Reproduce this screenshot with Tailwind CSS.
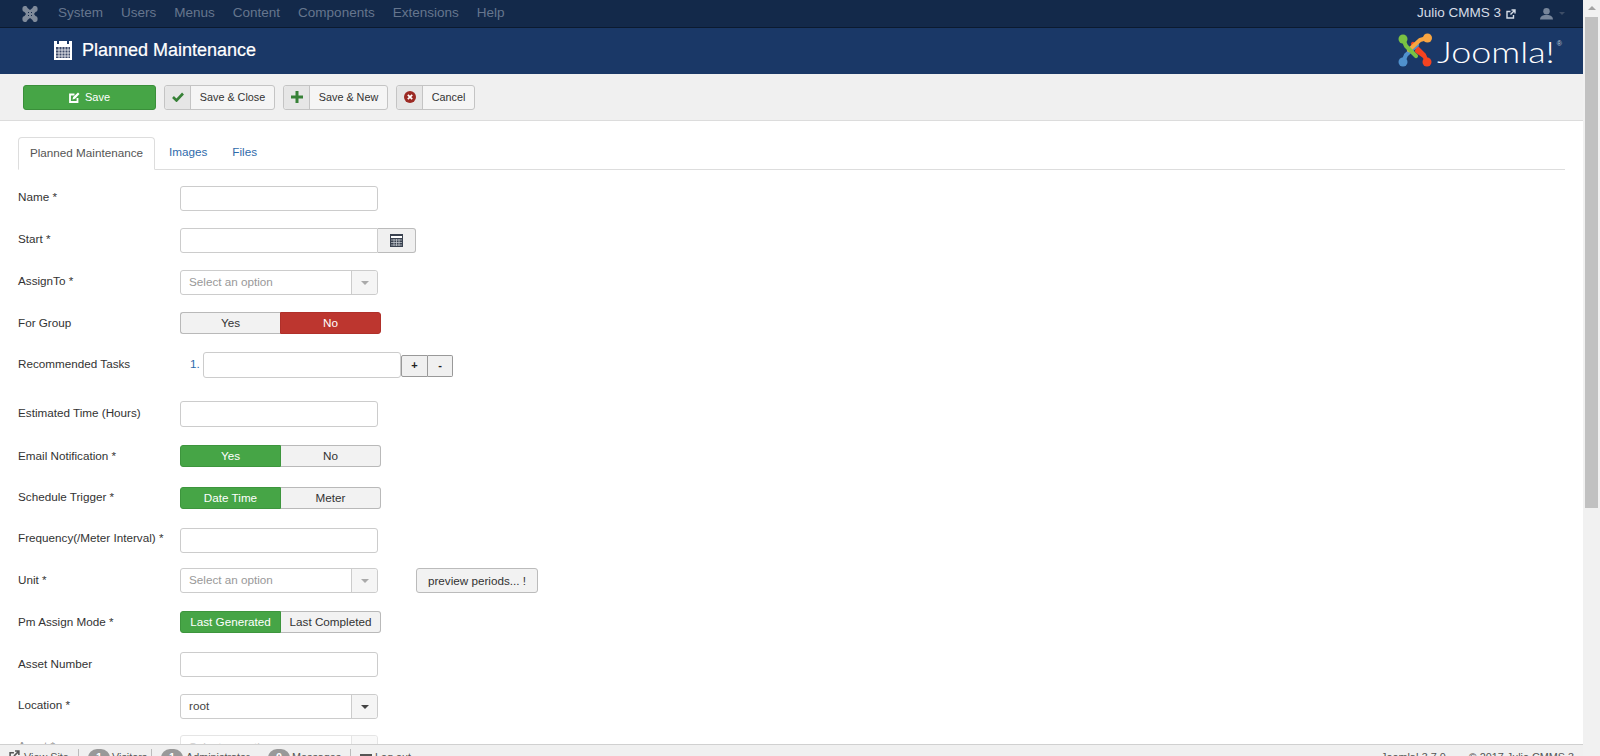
<!DOCTYPE html>
<html lang="en">
<head>
  <meta charset="UTF-8" />
  <title>Planned Maintenance</title>
  <script src="https://cdn.jsdelivr.net/npm/@tailwindcss/browser@4"></script>
</head>
<body class="font-['Liberation_Sans',sans-serif] text-[11.7px] text-[#333] bg-white overflow-hidden">
<div class="flex h-[756px] w-[1600px] overflow-hidden">
  <div class="flex flex-col w-[1583px] h-full">
    <!-- Top nav -->
    <nav class="h-[28px] shrink-0 bg-[#13294a] border-b border-[#0b1a30] flex items-center text-[13.5px] text-[#66768e]">
      <svg class="ml-[22px] w-[16px] h-[16px]" viewBox="0 0 16 16" fill="#808b9b">
        <path d="M0.5 3 a2.5 2.5 0 0 1 5-1 l2.500 2 2.500-2 a2.500 2.500 0 0 1 5 1 a2.500 2.500 0 0 1-2 3 l-1.500 2 1.500 2 a2.500 2.500 0 0 1 2 3 a2.500 2.500 0 0 1-5 1 l-2.500-2-2.500 2 a2.500 2.500 0 0 1-5-1 a2.500 2.500 0 0 1 2-3 l1.500-2-1.500-2 a2.500 2.500 0 0 1-2-3z"/>
        <path d="M6 6.500h1M9 6.500h1M6 9.500h1M9 9.500h1" stroke="#13294a" stroke-width="1.200"/>
      </svg>
      <div class="ml-[20px] flex gap-[18px]">
        <span>System</span><span>Users</span><span>Menus</span><span>Content</span><span>Components</span><span>Extensions</span><span>Help</span>
      </div>
      <div class="ml-auto flex items-center text-[#d5dce6]">
        <span>Julio CMMS 3</span>
        <svg class="ml-[5px] w-[10px] h-[10px]" viewBox="0 0 10 10" fill="none" stroke="#d5dce6" stroke-width="1.400">
          <path d="M7.500 6v3H1V2.500h3.500M5.500 1H9v3.500M9 1 4.500 5.500"/>
        </svg>
        <svg class="ml-[24px] w-[13px] h-[13px]" viewBox="0 0 14 13" fill="#77859a">
          <circle cx="7" cy="4" r="3.500"/><path d="M0 13c0-3 2-4.500 5-5h4c3 .5 5 2 5 5z"/>
        </svg>
        <span class="ml-[6px] mr-[18px] w-0 h-0 border-x-[3.500px] border-x-transparent border-t-[3.500px] border-t-[#3d4d66]"></span>
      </div>
    </nav>

    <!-- Title bar -->
    <header class="h-[46px] shrink-0 bg-[#1a3867] flex items-center">
      <svg class="ml-[54px] w-[18px] h-[19px] -mt-[2px]" viewBox="0 0 18 19">
        <rect width="18" height="19" fill="#fff"/>
        <rect x="3" y="0" width="2" height="3" fill="#1a3867"/><rect x="13" y="0" width="2" height="3" fill="#1a3867"/>
        <rect x="2" y="6" width="14" height="11" fill="#3d4a6a"/>
        <path d="M5 6v11M8 6v11M11 6v11M14 6v11M2 9h14M2 12h14M2 15h14" stroke="#fff" stroke-width=".8"/>
      </svg>
      <h1 class="ml-[10px] text-[18px] text-white [-webkit-text-stroke:0.2px_white] -mt-[1px]">Planned Maintenance</h1>
      <div class="ml-auto mr-[21px] flex items-start h-[34px] -mt-[2px]">
        <svg class="w-[34px] h-[34px]" viewBox="0 0 34 34" fill="none" stroke-width="4.200" stroke-linecap="round" stroke-linejoin="round">
          <path d="M29 29 L26 22 L15 11" stroke="#f44321"/>
          <path d="M5 29 L8 22 L19 12" stroke="#5091cd"/>
          <path d="M29 5 L22 7 L11 17" stroke="#f9a541"/>
          <path d="M5 6 L8 13 L18 23" stroke="#7ac143"/>
          <path d="M19 18 L26 23" stroke="#f44321"/>
          <circle cx="5" cy="6" r="4.500" fill="#7ac143" stroke="none"/>
          <circle cx="29.500" cy="5" r="4.500" fill="#f9a541" stroke="none"/>
          <circle cx="5" cy="29" r="4.500" fill="#5091cd" stroke="none"/>
          <circle cx="29" cy="29" r="4.500" fill="#f44321" stroke="none"/>
        </svg>
        <span class="ml-[5px] mt-[2px] w-[120px] font-['Lato',sans-serif] font-light text-[29px] leading-[34px] text-white origin-left [transform:scaleX(1.24)]">Joomla!</span>
        <span class="text-[7px] mt-[6px] text-[#c5cedb]">®</span>
      </div>
    </header>

    <!-- Toolbar -->
    <div class="h-[47px] shrink-0 bg-[#f0f0f0] border-b border-[#dcdcdc] flex items-center pl-[23px] text-[10.8px]">
      <button class="w-[133px] h-[25px] rounded-[3px] bg-[#46a546] border border-[#3a8f3a] text-white text-[11px] flex items-center justify-center gap-[5px]">
        <svg class="w-[11px] h-[11px]" viewBox="0 0 11 11" fill="none" stroke="#fff" stroke-width="1.800"><path d="M8.500 6v4H1V2.500h4.500"/><path d="M3.500 7.500 4.200 5 9 .5 10.500 2 6 6.800z" fill="#fff" stroke="none"/></svg>
        Save
      </button>
      <button class="ml-[8px] h-[25px] w-[111px] rounded-[3px] border border-[#c4c4c4] bg-[#f5f5f5] flex items-stretch">
        <span class="w-[26px] bg-[#e6e6e6] border-r border-[#c4c4c4] flex items-center justify-center rounded-l-[3px]">
          <svg class="w-[12px] h-[10px]" viewBox="0 0 12 10" fill="none" stroke="#378137" stroke-width="2.600"><path d="M1 5l3.500 3.500L11 1.500"/></svg>
        </span>
        <span class="flex-1 text-center leading-[23px]">Save &amp; Close</span>
      </button>
      <button class="ml-[8px] h-[25px] w-[105px] rounded-[3px] border border-[#c4c4c4] bg-[#f5f5f5] flex items-stretch">
        <span class="w-[26px] bg-[#e6e6e6] border-r border-[#c4c4c4] flex items-center justify-center rounded-l-[3px]">
          <svg class="w-[12px] h-[12px]" viewBox="0 0 12 12" fill="#378137"><path d="M4.500 0h3v4.500H12v3H7.500V12h-3V7.500H0v-3h4.500z"/></svg>
        </span>
        <span class="flex-1 text-center leading-[23px]">Save &amp; New</span>
      </button>
      <button class="ml-[8px] h-[25px] w-[79px] rounded-[3px] border border-[#c4c4c4] bg-[#f5f5f5] flex items-stretch">
        <span class="w-[26px] bg-[#e6e6e6] border-r border-[#c4c4c4] flex items-center justify-center rounded-l-[3px]">
          <svg class="w-[12px] h-[12px]" viewBox="0 0 12 12"><circle cx="6" cy="6" r="6" fill="#9c2a24"/><path d="M3.800 3.800l4.400 4.400M8.200 3.800l-4.400 4.400" stroke="#fff" stroke-width="1.700"/></svg>
        </span>
        <span class="flex-1 text-center leading-[23px]">Cancel</span>
      </button>
    </div>

    <!-- Content -->
    <main class="flex-1 overflow-hidden pl-[18px] pr-[18px]">
      <div class="mt-[16px] h-[33px] flex border-b border-[#ddd]">
        <span class="h-[33px] w-[137px] border border-[#ddd] border-b-white bg-white rounded-t-[4px] text-center leading-[29px] text-[#555]">Planned Maintenance</span>
        <span class="ml-[14px] leading-[30px] text-[#2f6bab]">Images</span>
        <span class="ml-[25px] leading-[30px] text-[#2f6bab]">Files</span>
      </div>

      <div class="mt-[16px]">
        <div class="flex h-[42px]">
          <label class="w-[162px] leading-[22px]">Name *</label>
          <span class="w-[198px] h-[25px] border border-[#ccc] rounded-[3px] bg-white"></span>
        </div>
        <div class="flex h-[42px]">
          <label class="w-[162px] leading-[22px]">Start *</label>
          <span class="w-[198px] h-[25px] border border-[#ccc] rounded-l-[3px] bg-white"></span>
          <span class="w-[38px] h-[25px] border border-l-0 border-[#bbb] rounded-r-[3px] bg-[#f0f0f0] flex items-center justify-center">
            <svg class="w-[13px] h-[13px]" viewBox="0 0 13 13"><rect width="13" height="13" fill="#3a4250"/><rect x="1" y="2" width="11" height="2" fill="#fff"/><path d="M1 6h11M1 8.500h11M1 11h11M4 5v7M6.500 5v7M9 5v7" stroke="#cfd3d8" stroke-width=".7"/></svg>
          </span>
        </div>
        <div class="flex h-[42px]">
          <label class="w-[162px] leading-[22px]">AssignTo *</label>
          <span class="w-[198px] h-[25px] border border-[#ccc] rounded-[3px] bg-white flex text-[#999]">
            <span class="flex-1 pl-[8px] leading-[22px]">Select an option</span>
            <span class="w-[26px] bg-[#f5f5f5] border-l border-[#ccc] flex items-center justify-center rounded-r-[3px]">
              <span class="w-0 h-0 border-x-[4px] border-x-transparent border-t-[4px] border-t-[#aaa]"></span>
            </span>
          </span>
        </div>
        <div class="flex h-[40px]">
          <label class="w-[162px] leading-[22px]">For Group</label>
          <span class="w-[201px] h-[22px] flex rounded-[3px] text-center leading-[20px]">
            <span class="w-[100px] border border-[#b9b9b9] border-r-0 bg-[#f2f2f2] rounded-l-[3px]">Yes</span>
            <span class="flex-1 border border-[#b0302a] bg-[#bd362f] text-white rounded-r-[3px]">No</span>
          </span>
        </div>
        <div class="flex h-[49px]">
          <label class="w-[162px] leading-[22px] mt-[1px]">Recommended Tasks</label>
          <span class="w-[23px] pl-[10px] leading-[24px] text-[#2f6bab]">1.</span>
          <span class="w-[198px] h-[26px] border border-[#ccc] rounded-[3px] bg-white"></span>
          <span class="mt-[3px] w-[27px] h-[22px] border border-[#999] bg-[#f0f0f0] rounded-l-[2px] text-center leading-[19px] font-bold text-[11px] text-[#222]">+</span>
          <span class="mt-[3px] w-[25px] h-[22px] border border-l-0 border-[#999] bg-[#f0f0f0] rounded-r-[2px] text-center leading-[19px] font-bold text-[11px] text-[#222]">-</span>
        </div>
        <div class="flex h-[44px]">
          <label class="w-[162px] leading-[22px] mt-[1px]">Estimated Time (Hours)</label>
          <span class="w-[198px] h-[26px] border border-[#ccc] rounded-[3px] bg-white"></span>
        </div>
        <div class="flex h-[42px]">
          <label class="w-[162px] leading-[22px]">Email Notification *</label>
          <span class="w-[201px] h-[22px] flex text-center leading-[20px]">
            <span class="w-[101px] border border-[#3d953d] bg-[#46a546] text-white rounded-l-[3px]">Yes</span>
            <span class="flex-1 border border-l-0 border-[#b9b9b9] bg-[#f2f2f2] rounded-r-[3px]">No</span>
          </span>
        </div>
        <div class="flex h-[40.500px]">
          <label class="w-[162px] leading-[20px]">Schedule Trigger *</label>
          <span class="w-[201px] h-[22px] flex text-center leading-[20px]">
            <span class="w-[101px] border border-[#3d953d] bg-[#46a546] text-white rounded-l-[3px]">Date Time</span>
            <span class="flex-1 border border-l-0 border-[#b9b9b9] bg-[#f2f2f2] rounded-r-[3px]">Meter</span>
          </span>
        </div>
        <div class="flex h-[40.500px]">
          <label class="w-[162px] leading-[20px]">Frequency(/Meter Interval) *</label>
          <span class="w-[198px] h-[25px] border border-[#ccc] rounded-[3px] bg-white"></span>
        </div>
        <div class="flex h-[43px]">
          <label class="w-[162px] leading-[22px] mt-[1px]">Unit *</label>
          <span class="w-[198px] h-[25px] border border-[#ccc] rounded-[3px] bg-white flex text-[#999]">
            <span class="flex-1 pl-[8px] leading-[22px]">Select an option</span>
            <span class="w-[26px] bg-[#f5f5f5] border-l border-[#ccc] flex items-center justify-center rounded-r-[3px]">
              <span class="w-0 h-0 border-x-[4px] border-x-transparent border-t-[4px] border-t-[#aaa]"></span>
            </span>
          </span>
          <span class="ml-[38px] w-[122px] h-[25px] border border-[#bbb] bg-[#f2f2f2] rounded-[3px] text-center leading-[23px]">preview periods... !</span>
        </div>
        <div class="flex h-[41px]">
          <label class="w-[162px] leading-[22px]">Pm Assign Mode *</label>
          <span class="w-[201px] h-[22px] flex text-center leading-[20px]">
            <span class="w-[101px] border border-[#3d953d] bg-[#46a546] text-white rounded-l-[3px]">Last Generated</span>
            <span class="flex-1 border border-l-0 border-[#b9b9b9] bg-[#f2f2f2] rounded-r-[3px]">Last Completed</span>
          </span>
        </div>
        <div class="flex h-[42px]">
          <label class="w-[162px] leading-[22px] mt-[1px]">Asset Number</label>
          <span class="w-[198px] h-[25px] border border-[#ccc] rounded-[3px] bg-white"></span>
        </div>
        <div class="flex h-[41px]">
          <label class="w-[162px] leading-[22px]">Location *</label>
          <span class="w-[198px] h-[25px] border border-[#ccc] rounded-[3px] bg-white flex text-[#444]">
            <span class="flex-1 pl-[8px] leading-[22px]">root</span>
            <span class="w-[26px] bg-[#f5f5f5] border-l border-[#ccc] flex items-center justify-center rounded-r-[3px]">
              <span class="w-0 h-0 border-x-[4px] border-x-transparent border-t-[4px] border-t-[#444]"></span>
            </span>
          </span>
        </div>
        <div class="flex h-[42px] opacity-50">
          <label class="w-[162px] leading-[22px]">Asset *</label>
          <span class="w-[198px] h-[25px] border border-[#ccc] rounded-[3px] bg-white flex text-[#999]">
            <span class="flex-1 pl-[8px] leading-[22px]">Select an option</span>
            <span class="w-[26px] bg-[#f5f5f5] border-l border-[#ccc] rounded-r-[3px]"></span>
          </span>
        </div>
      </div>
    </main>

    <!-- Status bar, cut off by the window -->
    <footer class="h-[12px] shrink-0 overflow-hidden bg-[#f0f0f0] border-t border-[#d0d0d0] text-[10.8px] text-[#555] whitespace-nowrap">
      <div class="flex items-start h-[24px] pt-[4px] leading-[16px]">
        <svg class="ml-[9px] mt-[1px] w-[11px] h-[11px]" viewBox="0 0 10 10" fill="none" stroke="#555" stroke-width="1.400"><path d="M7.500 6v3H1V2.500h3.500M5.500 1H9v3.500M9 1 4.500 5.500"/></svg>
        <span class="ml-[4px] w-[44px]">View Site</span>
        <span class="ml-[10px] w-px h-[16px] bg-[#bbb]"></span>
        <span class="ml-[9px] w-[22px] h-[18px] rounded-full bg-[#999] text-white text-center font-bold">1</span>
        <span class="ml-[2px] w-[30px]">Visitors</span>
        <span class="ml-[9px] w-px h-[16px] bg-[#bbb]"></span>
        <span class="ml-[9px] w-[22px] h-[18px] rounded-full bg-[#999] text-white text-center font-bold">1</span>
        <span class="ml-[3px] w-[63px]">Administrator</span>
        <span class="ml-[19px] w-[22px] h-[18px] rounded-full bg-[#999] text-white text-center font-bold">0</span>
        <span class="ml-[2px] w-[49px]">Messages</span>
        <span class="ml-[9px] w-px h-[16px] bg-[#bbb]"></span>
        <span class="ml-[9px] mt-[5px] w-[12px] h-[2px] bg-[#555]"></span>
        <span class="ml-[3px]">Log out</span>
        <span class="ml-auto">Joomla! 3.7.0</span>
        <span class="ml-[23px] mr-[9px]">© 2017 Julio CMMS 3</span>
      </div>
    </footer>
  </div>

  <!-- Page scrollbar -->
  <div class="w-[17px] h-full bg-[#f1f1f1] flex flex-col items-center">
    <span class="mt-[6px] w-0 h-0 border-x-[4px] border-x-transparent border-b-[4px] border-b-[#a3a3a3]"></span>
    <span class="mt-[7px] w-[13px] h-[491px] bg-[#c1c1c1]"></span>
  </div>
</div>
</body>
</html>
